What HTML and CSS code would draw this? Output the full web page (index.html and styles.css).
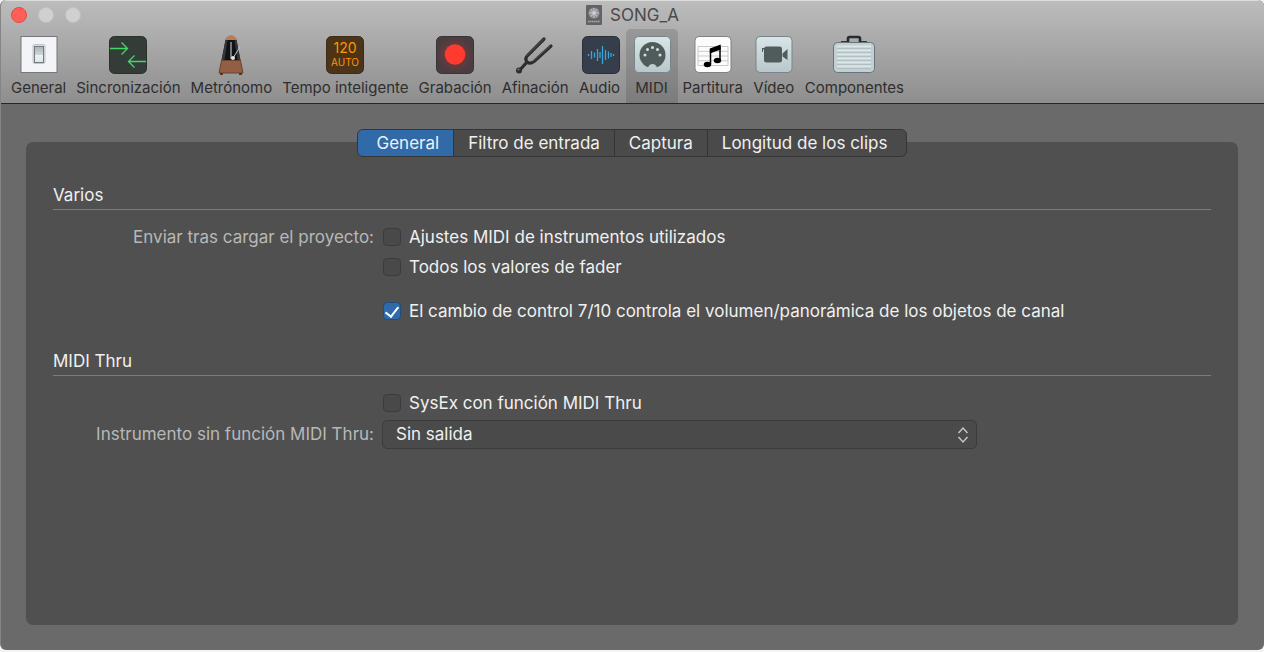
FILE: index.html
```html
<!DOCTYPE html>
<html lang="es">
<head>
<meta charset="utf-8">
<title>SONG_A</title>
<link rel="stylesheet" href="styles.css">
</head>
<body>
<div class="window">
  <header class="chrome">
    <div class="titlebar">
      <div class="lights">
        <button class="light light-close" aria-label="Cerrar"></button>
        <button class="light" aria-label="Minimizar"></button>
        <button class="light" aria-label="Zoom"></button>
      </div>
      <h1 class="title">
        <svg class="doc" viewBox="0 0 16 20"><rect width="16" height="20" rx="1" fill="#626366"/><circle cx="8" cy="8" r="5.500" fill="#8b8d91"/><path d="M8 3v10M3 8h10M4.500 4.500l7 7M11.500 4.500l-7 7" stroke="#b4b6ba" stroke-width="1.500"/><circle cx="8" cy="8" r="1.500" fill="#d2d4d6"/><path d="M2 16.500h12" stroke="#a5a6a8" stroke-width="1.500" stroke-dasharray="1.500 .4"/></svg>
        <span>SONG_A</span>
      </h1>
    </div>
    <nav class="toolbar">
      <button class="tool">
        <svg class="icon" viewBox="0 0 40 40"><defs><linearGradient id="sw" x2="0" y2="1"><stop stop-color="#aab5bb"/><stop offset=".5" stop-color="#ccd5d9"/><stop offset=".52" stop-color="#eef2f4"/><stop offset="1" stop-color="#dfe5e8"/></linearGradient></defs><rect x="2" y="2.500" width="36" height="36" fill="#f3f4f8" stroke="#75777a"/><rect x="14" y="10.500" width="12" height="19" rx="1.500" fill="#dbdee1" stroke="#c2c5c9"/><rect x="15.500" y="12.500" width="9" height="16" fill="url(#sw)" stroke="#747b80"/></svg>
        <span>General</span>
      </button>
      <button class="tool">
        <svg class="icon" viewBox="0 0 40 40"><rect x="1.500" y="2.500" width="37" height="37" rx="5" fill="#343c37" stroke="#29302b"/><path d="M2 14.500h17.500M13.500 8.500l6 6-6 6M38 27.500H20.500M26.500 21.500l-6 6 6 6" fill="none" stroke="#43d766" stroke-width="1.300"/></svg>
        <span>Sincronización</span>
      </button>
      <button class="tool">
        <svg class="icon" viewBox="0 0 40 40"><path d="M14.500 6h11l4 21h-19z" fill="#111214"/><path d="M14.500 6h2l-3 20h-3zM25.500 6h-2l3 20h3z" fill="#34363a"/><path d="M14 5l3-3 3-1 3 1 3 3v1H14z" fill="#b77c59"/><path d="M10.500 26.500h19l2.500 12.500h-24z" fill="#925f46" stroke="#6c432f"/><path d="M9 39h3v2H9zM28 39h3v2h-3z" fill="#583422"/><path d="M20 8v17" stroke="#74777b" stroke-width="2"/><path d="M22 24l7-11" stroke="#c6c8ca" stroke-width="1"/><circle cx="22" cy="24" r="2" fill="#e4e4e4"/></svg>
        <span>Metrónomo</span>
      </button>
      <button class="tool">
        <svg class="icon" viewBox="0 0 40 40"><rect x="1.500" y="2.500" width="37" height="37" rx="5" fill="#4c3419" stroke="#3d2b17"/><text x="20" y="19" class="tempo-number">120</text><text x="20" y="32" class="tempo-mode">AUTO</text></svg>
        <span>Tempo inteligente</span>
      </button>
      <button class="tool">
        <svg class="icon" viewBox="0 0 40 40"><defs><radialGradient id="rec"><stop offset=".3" stop-color="#78383b"/><stop offset="1" stop-color="#483d40"/></radialGradient></defs><rect x="1.500" y="2.500" width="37" height="37" rx="5" fill="url(#rec)" stroke="#3a3436"/><circle cx="20" cy="20.500" r="10.300" fill="#ff3b30"/></svg>
        <span>Grabación</span>
      </button>
      <button class="tool">
        <svg class="icon" viewBox="0 0 40 40"><g fill="none" stroke-linecap="round"><path d="M29 5L12.500 21.500Q9.500 25 12 28Q15 30.500 19 27.500L36 12M12 28L4 37" stroke="#2c2d2e" stroke-width="3.200"/><path d="M28 5.500L12 21.500M35 12L18 27" stroke="#626466" stroke-width=".8"/></g><circle cx="4" cy="36.500" r="3" fill="#2d2e2f"/><circle cx="3.500" cy="35.500" r="1" fill="#77797a"/></svg>
        <span>Afinación</span>
      </button>
      <button class="tool">
        <svg class="icon" viewBox="0 0 40 40"><rect x="2.500" y="2.500" width="37" height="37" rx="5" fill="#353e4a" stroke="#29303a"/><path d="M8.500 20v2M11.500 17v8M14.500 18.500v5M17.500 15v12M20 18v6M22.500 12v18M25.500 16v10M28.500 17.500v7M31 19v4M33.500 20v2" stroke="#35a8d8" stroke-width="1.300"/></svg>
        <span>Audio</span>
      </button>
      <button class="tool tool-selected" aria-pressed="true">
        <svg class="icon" viewBox="0 0 40 40"><defs><linearGradient id="pale" x2="0" y2="1"><stop stop-color="#d9e5e6"/><stop offset="1" stop-color="#b9c7ca"/></linearGradient></defs><rect x="2.500" y="2.500" width="36" height="36" rx="4" fill="url(#pale)" stroke="#77858a"/><circle cx="20.500" cy="21" r="13" fill="#505c5c"/><path d="M16 35v-1q1-4 4.500-4t4.500 4v1z" fill="#bfccd0"/><g fill="#d4dfe1"><circle cx="13" cy="21" r="1.500"/><circle cx="15.500" cy="15.500" r="1.500"/><circle cx="20.500" cy="13.500" r="1.500"/><circle cx="25.500" cy="15.500" r="1.500"/><circle cx="28" cy="21" r="1.500"/></g></svg>
        <span>MIDI</span>
      </button>
      <button class="tool">
        <svg class="icon" viewBox="0 0 40 40"><rect x="2" y="2.500" width="36" height="36" rx="4" fill="#fcfcfc" stroke="#808080"/><path d="M5 12.500h30v19H5zM5 17.300h30M5 22h30M5 26.800h30" fill="none" stroke="#cacaca"/><path d="M17.500 30V15.500M27 12.500V26" fill="none" stroke="#000" stroke-width="1.500"/><path d="M16.800 14.500L27.700 10.500v5L16.800 19.500z"/><ellipse cx="14.500" cy="30.500" rx="3.700" ry="2.700"/><ellipse cx="24.500" cy="26.500" rx="3.700" ry="2.700"/></svg>
        <span>Partitura</span>
      </button>
      <button class="tool">
        <svg class="icon" viewBox="0 0 40 40"><rect x="2" y="2.500" width="36" height="36" rx="4" fill="url(#pale)" stroke="#77858a"/><rect x="10" y="12.500" width="18" height="16" rx="2.500" fill="#505c5c"/><path d="M28.500 19.500l5-4.500v11l-5-3.500zM8 14h3v1.500H9V18H8z" fill="#505c5c"/></svg>
        <span>Vídeo</span>
      </button>
      <button class="tool">
        <svg class="icon icon-wide" viewBox="0 0 44 40"><path d="M16 8V4.500q0-1.500 1.500-1.500h9q1.500 0 1.500 1.500V8" fill="none" stroke="#292b2c" stroke-width="2.600"/><path d="M9 8h6M29 8h6" stroke="#383b3d" stroke-width="2"/><rect x="1.500" y="8.500" width="41" height="30" rx="4" fill="#c3d0d3" stroke="#67757a"/><path d="M5 12.500h34M5 16.500h34M5 20.500h34M5 24.500h34M5 28.500h34M5 32.500h34" stroke="#dce6e8" stroke-width="2.200"/><path d="M5 14.300h34M5 18.300h34M5 22.300h34M5 26.300h34M5 30.300h34M5 34.300h34" stroke="#9eacb0" stroke-width=".6"/></svg>
        <span>Componentes</span>
      </button>
    </nav>
  </header>
  <main class="content">
    <div class="tabs" role="tablist">
      <button class="tab tab-selected" role="tab" aria-selected="true">General</button>
      <button class="tab" role="tab">Filtro de entrada</button>
      <button class="tab" role="tab">Captura</button>
      <button class="tab" role="tab">Longitud de los clips</button>
    </div>
    <div class="panel">
      <section>
        <h2 class="heading">Varios</h2>
        <div class="form">
          <span class="caption">Enviar tras cargar el proyecto:</span>
          <div class="options">
            <label class="option"><input class="check" type="checkbox"><span>Ajustes MIDI de instrumentos utilizados</span></label>
            <label class="option"><input class="check" type="checkbox"><span>Todos los valores de fader</span></label>
            <label class="option option-apart"><input class="check" type="checkbox" checked><span>El cambio de control 7/10 controla el volumen/panorámica de los objetos de canal</span></label>
          </div>
        </div>
      </section>
      <section>
        <h2 class="heading">MIDI Thru</h2>
        <div class="form">
          <label class="option option-alone"><input class="check" type="checkbox"><span>SysEx con función MIDI Thru</span></label>
          <label class="caption caption-picker" for="thru">Instrumento sin función MIDI Thru:</label>
          <div class="picker">
            <select class="select" id="thru"><option>Sin salida</option></select>
            <svg class="arrows" viewBox="0 0 12 18"><path d="M1.500 7L6 2l4.500 5M1.500 11L6 16l4.500-5" fill="none" stroke="#c4c4c4" stroke-width="1.500"/></svg>
          </div>
        </div>
      </section>
    </div>
  </main>
</div>
</body>
</html>
```
FILE: styles.css
```css
* {
  box-sizing: border-box;
}

body {
  margin: 0;
  background: #f4f4f4;
  font-family: Inter, "Liberation Sans", sans-serif;
  font-size: 17px;
  line-height: 20px;
  color: #f0f0f0;
}

button,
select {
  font: inherit;
  border: 0;
  padding: 0;
  margin: 0;
  background: none;
}

.window {
  display: flex;
  flex-direction: column;
  min-height: calc(100vh - 2px);
  border-left: 1px solid #858585;
  border-radius: 6px;
  overflow: hidden;
  background: #6a6a6a;
}

.chrome {
  border-top: 1px solid #dcdcdc;
  border-bottom: 1px solid #262626;
  background: linear-gradient(#bcbcbc, #8e8e8e);
}

.titlebar {
  display: grid;
  grid-template-columns: 1fr auto 1fr;
  align-items: center;
  height: 28px;
}

.lights {
  display: flex;
  gap: 11px;
  padding-left: 10px;
}

.light {
  width: 16px;
  height: 16px;
  border: 1px solid #c2c2c2;
  border-radius: 50%;
  background: #d0d0d0;
}

.light-close {
  border-color: #e8473f;
  background: #fe5f57;
}

.title {
  display: flex;
  align-items: center;
  gap: 8px;
  margin: 0;
  font-size: 17px;
  font-weight: 400;
  color: #4a4a4a;
}

.doc {
  width: 16px;
  height: 20px;
}

.toolbar {
  display: flex;
  padding-left: 5px;
}

.tool {
  display: flex;
  flex-direction: column;
  align-items: center;
  gap: 4px;
  min-width: 52px;
  height: 74px;
  padding: 5px;
  border-radius: 5px 5px 0 0;
  font-size: 15px;
  line-height: 20px;
  white-space: nowrap;
  color: #2e2e2e;
}

.tool-selected {
  background: rgba(0, 0, 0, 0.13);
}

.icon {
  width: 40px;
  height: 40px;
  overflow: visible;
}

.icon-wide {
  width: 44px;
}

.tempo-number,
.tempo-mode {
  fill: #ff9500;
  text-anchor: middle;
  font-size: 14px;
}

.tempo-mode {
  font-size: 10px;
}

.content {
  display: flex;
  flex: 1;
  flex-direction: column;
  padding: 25px 26px 25px 25px;
}

.tabs {
  display: flex;
  align-self: center;
  z-index: 1;
  height: 28px;
  border: 1px solid #353535;
  border-radius: 6px;
  overflow: hidden;
  background: #4a4a4a;
}

.tab {
  padding: 0 14px;
  border-right: 1px solid #353535;
  color: #f0f0f0;
}

.tab:last-child {
  padding-right: 19px;
  border-right: 0;
}

.tab-selected {
  padding-left: 19px;
  background: #306aa8;
}

.panel {
  flex: 1;
  margin-top: -15px;
  padding: 43px 27px 24px;
  border-radius: 7px;
  background: #505050;
}

.heading {
  margin: 0 0 15px;
  padding-bottom: 4px;
  border-bottom: 1px solid #7c7c7c;
  font-size: 17px;
  font-weight: 400;
}

.form {
  display: grid;
  grid-template-columns: 321px minmax(0, 595px);
  column-gap: 8px;
  row-gap: 5px;
  margin-bottom: 28px;
}

.caption {
  text-align: right;
  white-space: nowrap;
  color: #b8b8b8;
  line-height: 24px;
}

.caption-picker {
  line-height: 28px;
}

.options {
  display: flex;
  flex-direction: column;
  gap: 6px;
}

.option {
  display: flex;
  align-items: center;
  gap: 8px;
  height: 24px;
  white-space: nowrap;
}

.option-apart {
  margin-top: 14px;
}

.option-alone {
  grid-column: 2;
}

.check {
  appearance: none;
  display: grid;
  flex: none;
  place-items: center;
  width: 18px;
  height: 18px;
  margin: 0 0 0 1px;
  border: 1px solid #3c3c3c;
  border-radius: 4px;
  background: #494949;
}

.check:checked {
  border-color: #214d7e;
  background: #306aa8;
}

.check:checked::before {
  content: "";
  width: 6px;
  height: 11px;
  margin-bottom: 2px;
  border: solid #fff;
  border-width: 0 2px 2px 0;
  transform: rotate(38deg);
}

.picker {
  display: grid;
  align-items: center;
}

.select {
  grid-area: 1 / 1;
  appearance: none;
  width: 100%;
  height: 29px;
  padding: 0 36px 2px 13px;
  border: 1px solid #3c3c3c;
  border-radius: 5px;
  background: #4a4a4a;
  color: #f0f0f0;
}

.arrows {
  grid-area: 1 / 1;
  justify-self: end;
  width: 12px;
  height: 18px;
  margin-right: 8px;
  pointer-events: none;
}
```
